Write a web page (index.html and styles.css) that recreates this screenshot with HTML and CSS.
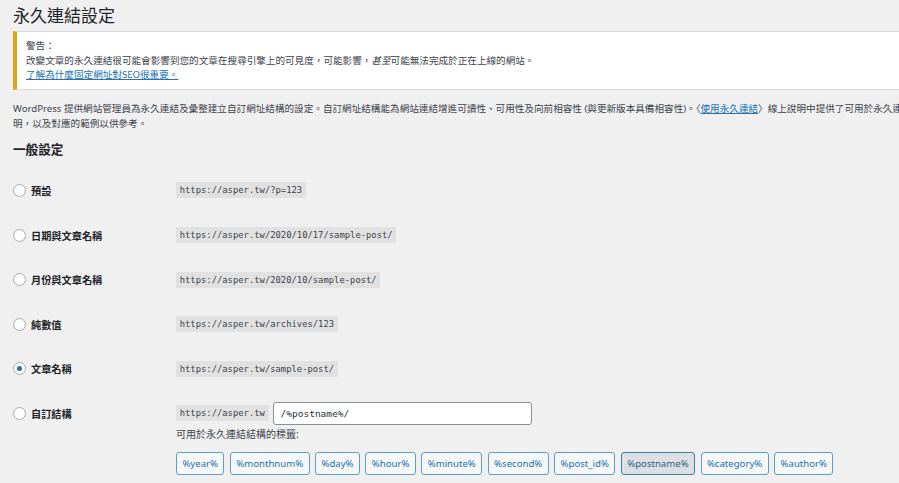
FILE: index.html
```html
<!DOCTYPE html>
<html lang="zh-Hant">
<head>
  <meta charset="UTF-8" />
  <meta name="viewport" content="width=device-width, initial-scale=1.0"/>
  <title>永久連結設定</title>
  <link rel="stylesheet" href="styles.css">
</head>
<body>
  <div class="wrap">
    <h1>永久連結設定</h1>

    <div class="notice">
      <p>警告：</p>
      <p>改變文章的永久連結很可能會影響到您的文章在搜尋引擎上的可見度，可能影響，<em>甚至</em>可能無法完成於正在上線的網站。</p>
      <p><a href="#">了解為什麼固定網址對SEO很重要。</a></p>
    </div>

    <p class="intro">
      WordPress 提供網站管理員為永久連結及彙整建立自訂網址結構的設定。自訂網址結構能為網站連結增進可讀性、可用性及向前相容性 (與更新版本具備相容性)。〈<a href="#">使用永久連結</a>〉線上說明中提供了可用於永久連結結構的標籤說<br>明，以及對應的範例以供參考。
    </p>

    <h2>一般設定</h2>

    <div class="form-table">
      <div class="row">
        <label class="choice"><input type="radio" name="permalink"> 預設</label>
        <div class="field"><div class="line"><code>https://asper.tw/?p=123</code></div></div>
      </div>
      <div class="row">
        <label class="choice"><input type="radio" name="permalink"> 日期與文章名稱</label>
        <div class="field"><div class="line"><code>https://asper.tw/2020/10/17/sample-post/</code></div></div>
      </div>
      <div class="row">
        <label class="choice"><input type="radio" name="permalink"> 月份與文章名稱</label>
        <div class="field"><div class="line"><code>https://asper.tw/2020/10/sample-post/</code></div></div>
      </div>
      <div class="row">
        <label class="choice"><input type="radio" name="permalink"> 純數值</label>
        <div class="field"><div class="line"><code>https://asper.tw/archives/123</code></div></div>
      </div>
      <div class="row">
        <label class="choice"><input type="radio" name="permalink" checked> 文章名稱</label>
        <div class="field"><div class="line"><code>https://asper.tw/sample-post/</code></div></div>
      </div>
      <div class="row">
        <label class="choice"><input type="radio" name="permalink"> 自訂結構</label>
        <div class="field">
          <div class="line">
            <code>https://asper.tw</code>
            <input type="text" class="structure" value="/%postname%/">
          </div>
          <p class="tags-label">可用於永久連結結構的標籤:</p>
          <ul class="tags">
            <li><button type="button">%year%</button></li>
            <li><button type="button">%monthnum%</button></li>
            <li><button type="button">%day%</button></li>
            <li><button type="button">%hour%</button></li>
            <li><button type="button">%minute%</button></li>
            <li><button type="button">%second%</button></li>
            <li><button type="button">%post_id%</button></li>
            <li><button type="button" class="active">%postname%</button></li>
            <li><button type="button">%category%</button></li>
            <li><button type="button">%author%</button></li>
          </ul>
        </div>
      </div>
    </div>
  </div>
</body>
</html>
```

FILE: styles.css
```css
body {
  margin: 0;
  background-color: #f0f0f1;
  color: #3c434a;
  font-family: "Noto Sans", "Noto Sans CJK TC", sans-serif;
  font-size: 9.6px;
  overflow: hidden;
}

a {
  color: #2271b1;
}

.wrap {
  padding-left: 13px;
}

h1 {
  margin: 0;
  padding-top: 4px;
  font-size: 17px;
  line-height: 23px;
  font-weight: 400;
  color: #1d2327;
}

.notice {
  margin: 4px -20px 0 0;
  padding: 7px 12px 6px 9px;
  background-color: white;
  border: 1px solid #dcdcde;
  border-left: 4px solid #dba617;
}

.notice p {
  margin: 0;
  line-height: 14.5px;
}

.intro {
  margin: 11.5px 0 0;
  width: 1000px;
  line-height: 15px;
}

h2 {
  margin: 9.5px 0 0;
  font-size: 12.6px;
  line-height: 18px;
  color: #1d2327;
}

.form-table {
  margin-top: 9.7px;
}

.row {
  display: grid;
  grid-template-columns: 163px 1fr;
  padding: 10.3px 0;
}

.choice {
  display: flex;
  align-items: center;
  height: 24px;
  font-size: 10.2px;
  font-weight: 700;
  color: #1d2327;
}

.choice input {
  appearance: none;
  width: 13px;
  height: 13px;
  margin: 0 5px 0 0;
  border: 1px solid #a7aaad;
  border-radius: 50%;
  background-color: white;
  display: grid;
  place-content: center;
}

.choice input:checked::before {
  content: "";
  width: 5px;
  height: 5px;
  border-radius: 50%;
  background-color: #2271b1;
}

.line {
  display: flex;
  align-items: center;
  gap: 4px;
  height: 24px;
}

code {
  font-family: "DejaVu Sans Mono", monospace;
  font-size: 8.85px;
  line-height: 16px;
  padding: 0 3.7px;
  background-color: #e1e1e2;
  color: #3c434a;
}

.structure {
  width: 259px;
  height: 23px;
  box-sizing: border-box;
  padding: 0 7px;
  border: 1px solid #8c8f94;
  border-radius: 3px;
  font-family: "DejaVu Sans Mono", monospace;
  font-size: 9.5px;
  color: #2c3338;
}

.tags-label {
  margin: 1.5px 0 0;
  font-size: 10px;
  line-height: 15px;
}

.tags {
  list-style: none;
  margin: 10.5px 0 0;
  padding: 0;
  display: flex;
  gap: 5.5px;
}

.tags button {
  height: 23px;
  padding: 0 5.4px;
  border: 1px solid #5f9ec4;
  border-radius: 3px;
  background-color: #f6f7f7;
  color: #2271b1;
  font-family: "Noto Sans", sans-serif;
  font-size: 9.6px;
}

.tags button.active {
  background-color: #dcdfe3;
  border-color: #3f7ea3;
  color: #2b5f86;
}
```
